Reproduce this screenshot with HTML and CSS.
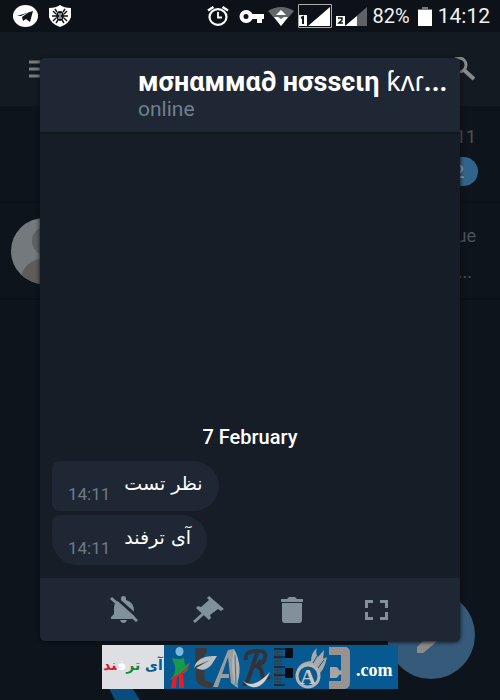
FILE: index.html
```
<!DOCTYPE html>
<html lang="en">
<head>
<meta charset="utf-8">
<meta name="viewport" content="width=device-width, initial-scale=1">
<title>Chat preview</title>
<link rel="stylesheet" href="styles.css">
</head>
<body>
<div class="screen">
  <header class="status">
    <svg width="25" height="22" viewBox="0 0 25 22"><ellipse cx="12.500" cy="11" rx="12.500" ry="11" fill="#fff"/><path d="M4 11 20 6l-3 11-4-3-3 2-1-4 7-5-8 4z" fill="#0d1219"/></svg>
    <svg class="shield" width="22" height="22" viewBox="0 0 22 22"><path d="M11 0q4 3 11 3v9q-2 7-11 10Q2 19 0 12V3q7 0 11-3z" fill="#fff"/><ellipse cx="11" cy="11" rx="4" ry="5" fill="#0d1219"/><path d="M8 7 6 4M14 7l2-3M7 9 4 6M15 9l3-3M7 11H3M15 11h4M7 13l-3 3M15 13l3 3M9 15l-2 3M13 15l2 3" stroke="#0d1219" stroke-width="1.400"/><path d="M9 9h4M9 13h4M10 11h2" stroke="#fff"/></svg>
    <span class="spacer"></span>
    <svg width="22" height="20" viewBox="0 0 22 20" fill="none" stroke="#fff"><ellipse cx="11" cy="11" rx="8.500" ry="7.800" stroke-width="2.200"/><path d="M1 4.500 6.500 1M21 4.500 15.500 1" stroke-width="2.400"/><path d="M11 6v5.500h4" stroke-width="1.800"/></svg>
    <svg class="key" width="25" height="13" viewBox="0 0 25 13"><path d="M7 0c3 0 5.500 2 6.500 4H25v5h-2v4h-5V9h-4.500C12 11.500 10 13 7 13a6.500 6.500 0 0 1 0-13zm0 4a2.500 2.500 0 1 0 0 5 2.500 2.500 0 0 0 0-5z" fill="#fff" fill-rule="evenodd"/></svg>
    <svg class="wifi" width="26" height="19" viewBox="0 0 26 19"><path d="M0 4q13-8 26 0L13 19z" fill="#62666b"/><path d="M13 3l5 5H8z" fill="#fff"/><path d="M6 10h4l3 2 3-2h4l-7 9z" fill="#fff"/></svg>
    <svg class="sim" width="34" height="24" viewBox="0 0 34 24"><path d="M.5.5h33v23H.5z" fill="none" stroke="#aaa"/><path d="M32 3v19H10zM1 11h8v11H1z" fill="#fff"/><path d="m3 14 2-1v7" fill="none" stroke="#0d1219" stroke-width="2"/></svg>
    <svg class="sim2" width="31" height="19" viewBox="0 0 31 19"><path d="M31 0v19H9z" fill="#5e6267"/><path d="M21 9v10H9zM0 9h9v10H0z" fill="#fff"/><path d="M2 11h4v2L3 16h4" fill="none" stroke="#0d1219" stroke-width="1.500"/></svg>
    <span class="percent">82%</span>
    <svg class="battery" width="14" height="19" viewBox="0 0 14 19"><path d="M4 0h6v2h4v3H0V2h4z" fill="#74777b"/><path d="M0 3h14v16H0z" fill="#fff"/></svg>
    <span class="clock">14:12</span>
  </header>

  <div class="appbar">
    <button class="icon-button" aria-label="Menu"><svg width="24" height="18" viewBox="0 0 24 18"><path d="M0 2h24M0 9h24M0 16h24" stroke="#777b7f" stroke-width="3"/></svg></button>
    <button class="icon-button" aria-label="Search"><svg width="25" height="24" viewBox="0 0 25 24" fill="none" stroke="#888b8e"><circle cx="9" cy="8" r="7" stroke-width="3"/><path d="m14 13 10 9" stroke-width="4"/></svg></button>
  </div>

  <main>
    <div class="row">
      <div></div>
      <div class="meta"><span>14:11</span><span class="badge">2</span></div>
    </div>
    <div class="row">
      <svg class="avatar" width="66" height="66" viewBox="0 0 66 66"><defs><clipPath id="face"><circle cx="33" cy="33" r="33"/></clipPath></defs><g clip-path="url(#face)"><path d="M0 0h66v66H0z" fill="#74797d"/><circle cx="35" cy="23" r="14" fill="#5e6062"/><ellipse cx="35" cy="61" rx="25" ry="21" fill="#5e5b5d"/></g></svg>
      <div class="meta"><span>Tue</span><span class="dots">...</span></div>
    </div>
  </main>

  <div class="swoosh"></div>
  <button class="compose" aria-label="New message"><svg width="36" height="36" viewBox="0 0 36 36"><path d="M4 36v-6l20-20 8 8-22 18z" fill="#8d8b89"/></svg></button>

  <div class="overlay">
    <section class="preview">
      <header class="peer">
        <h1>мσнαммα∂ нσѕѕєιη <span class="light">ƙʌɾ</span>...</h1>
        <p>online</p>
      </header>
      <div class="messages">
        <h2>7 February</h2>
        <div class="bubble"><time>14:11</time><p lang="fa" dir="rtl">نظر تست</p></div>
        <div class="bubble last"><time>14:11</time><p lang="fa" dir="rtl">آی ترفند</p></div>
      </div>
      <footer class="actions">
        <button aria-label="Mute"><svg width="28" height="28" viewBox="0 0 28 28"><path d="M11 4V2q0-2 2.500-2T16 2v2q8 2 8 11v4l2 4H1v-2l3-3v-7q0-6 7-7z"/><path d="M10 24h7q-1 3-3.500 3T10 24z"/><path d="m3-1 28 25" stroke="#1e2733" stroke-width="3"/><path d="m1 2 26 23" stroke="#82909c" stroke-width="3"/></svg></button>
        <button aria-label="Pin"><svg width="32" height="28" viewBox="0 0 32 28"><path d="m17 0 15 13-3 2-3-2-8 6 1 3-2 2L4 12l2-2 3 1 8-7-2-2z"/><path d="m11 18-9 8" stroke="#82909c" stroke-width="3"/></svg></button>
        <button aria-label="Delete"><svg width="22" height="26" viewBox="0 0 22 26"><path d="M0 2h6l2-2h6l2 2h6v3H0zM1 6h20v17q0 3-3 3H4q-3 0-3-3z"/></svg></button>
        <button aria-label="Expand"><svg width="23" height="20" viewBox="0 0 23 20"><path d="M0 0h8v3H3v5H0zM15 0h8v8h-3V3h-5zM0 12h3v5h5v3H0zM20 12h3v8h-8v-3h5z"/></svg></button>
      </footer>
    </section>
  </div>

  <div class="watermark">
    <div class="brand" lang="fa" dir="rtl"><span class="blue">آی</span> <span class="green">تر</span><span class="white">ف</span><span class="red">ند</span></div>
    <svg class="art" viewBox="0 0 188 44" width="188" height="44">
      <ellipse cx="15.500" cy="6.500" rx="4" ry="4.500" fill="#79b9dc"/>
      <path d="M8 13q6 2 12 0l1 8 5-4-3 9-10 6-7 3q6-6 5-14z" fill="#16994b"/>
      <path d="M26 17q-1 7-7 11l1 15h-5V31l-2 1-1 11H7l2-11q14-6 17-15z" fill="#e81b29"/>
      <path d="M31 3h12v4q-5 4-3 14l1 14 9 4v3q-15 3-18-8z" fill="#383a3d"/>
      <path d="M30 23q3-13 23-12l-5 8q-7 9-16 4l14-8-14 6z" fill="#bdc0c2"/>
      <path d="M49 42 64 5l6-1 4 39-7-5-3-26-6 17h7v4h-8l-3 9z" fill="#9a9da0"/><path d="M70 4q10 18 2 38-7-18-2-38z" fill="#b0b4b6"/><path d="m71 10 1 30" stroke="#337399"/>
      <path d="M82 15q-2-9 11-9 10-1 8 7-1 6-9 8 6 1 6 8 0 6 8 3M93 8 84 35q-2 6-5 3M87 22q8 0 10-7" fill="none" stroke="#313338" stroke-width="4"/>
      <path d="M79 36q10 9 27-9-7 17-18 15-5-1-9-6z" fill="#d2d2d0"/>
      <path d="M114 3v38" stroke="#2f4350" stroke-width="8" stroke-dasharray="2 1"/><path d="M110 4h11M110 12h11M110 22h11M110 30h11M110 40h11" stroke="#111"/><path d="M121 3h8v10h-8zM121 23h8v10h-8z" fill="#080b0f"/>
      <path d="M132 34q-1-17 15-18 0-8 6-13-2 6 1 9l6-7-1 9 4-2q-3 15-10 18z" fill="#aaa9a8"/><circle cx="144" cy="31" r="11" fill="#075a91" stroke="#b5b5b4" stroke-width="3"/><text x="136" y="39" class="letter">A</text><path d="m149 18 6-10m-1 15 6-8" stroke="#075a91"/>
      <path d="M165 2h17q4 1 4 6v29q0 6-5 7h-16v-8h12V10h-12z" fill="#969391"/><path d="M166 22h6q2 0 3 3l3 1v3l-3 1q-1 3-3 3h-6z" fill="#a8a4a1"/>
    </svg>
    <span class="domain">.com</span>
  </div>
</div>
</body>
</html>
```
FILE: styles.css
```
* { box-sizing: border-box; }
body { margin: 0; background: #0e141b; font-family: Roboto, "Noto Sans", "DejaVu Sans", sans-serif; }
h1, h2, p { margin: 0; }
svg { display: block; flex: none; }
button { display: block; padding: 0; border: 0; background: none; }
.screen { position: relative; min-height: 100vh; overflow: hidden; }

.status { display: flex; align-items: center; height: 32px; padding: 0 10px 0 13px; background: #0d1219; color: #f2f2f2; font-size: 20px; }
.shield { margin-left: 11px; }
.spacer { flex: 1; }
.key { margin-left: 10px; }
.wifi { margin-left: 4px; }
.sim { margin-left: 4px; }
.sim2 { margin-left: 4px; }
.percent { margin: 0 8px 0 6px; }
.battery { margin-right: 6px; }
.clock { font-size: 21px; }

.appbar { display: flex; align-items: center; justify-content: space-between; height: 74px; padding: 0 25px 0 29px; background: #141a21; }
.row { display: flex; align-items: center; justify-content: space-between; height: 97px; padding: 0 22px 0 11px; border-bottom: 2px solid #0b1117; }
.meta { display: flex; flex-direction: column; align-items: flex-end; gap: 10px; padding: 6px 2px 0 0; color: #4c5157; font-size: 18px; line-height: 20px; }
.badge { width: 38px; height: 29px; margin-right: -2px; border-radius: 15px; background: #31648b; color: #8b99a5; font-weight: 500; line-height: 29px; text-align: center; }
.dots { padding: 6px 4px 0 0; }

.compose { position: absolute; right: 25px; bottom: 21px; width: 88px; height: 88px; padding: 26px; border-radius: 50%; background: #365a79; }
.swoosh { position: absolute; bottom: 0; left: 104px; width: 36px; height: 22px; background: #084d7c; clip-path: polygon(0 0, 60% 0, 100% 100%, 30% 100%); }

.overlay { position: absolute; inset: 0; display: flex; padding: 58px 40px 59px; }
.preview { display: flex; flex: 1; flex-direction: column; min-width: 0; overflow: hidden; border-radius: 5px; background: #161d26; box-shadow: 0 1px 4px #080d13; }
.peer { height: 76px; padding: 10px 0 0 98px; border-bottom: 2px solid #10171f; background: #1e2733; white-space: nowrap; }
.peer h1 { color: #fff; font-size: 27px; font-weight: 700; line-height: 28px; }
.peer .light { font-weight: 400; }
.peer p { color: #71808e; font-size: 21px; line-height: 26px; }
.messages { display: flex; flex: 1; flex-direction: column; align-items: flex-start; justify-content: flex-end; gap: 4px; padding: 0 12px 13px; }
.messages h2 { align-self: center; margin-bottom: 8px; color: #fff; font-size: 20px; font-weight: 500; line-height: 24px; }
.bubble { display: flex; gap: 14px; height: 50px; padding: 0 16px; border-radius: 8px 25px 25px 8px; background: #1e2733; }
.bubble.last { border-bottom-left-radius: 25px; }
.bubble time { align-self: flex-end; color: #6d7a87; font-size: 17px; line-height: 34px; }
.bubble p { color: #fff; font-family: "DejaVu Sans", sans-serif; font-size: 19px; line-height: 44px; }
.actions { display: grid; grid-template-columns: repeat(4, 1fr); align-items: center; justify-items: center; height: 63px; padding: 0 42px; background: #1e2733; }
.actions button { fill: #82909c; }

.watermark { position: absolute; bottom: 11px; left: 102px; display: flex; height: 44px; background: #075a91; }
.brand { width: 62px; background: #dddfe2; font-family: "DejaVu Sans", sans-serif; font-size: 14px; font-weight: 700; line-height: 40px; text-align: center; white-space: nowrap; }
.blue { color: #075b92; }
.green { color: #15883b; }
.white { color: #fff; }
.red { color: #d9162d; }
.letter { fill: #c9c7c3; font: 700 22px "Liberation Serif", serif; }
.domain { width: 46px; padding-left: 4px; color: #fff; font: 700 18px/50px "Liberation Serif", serif; }
```
